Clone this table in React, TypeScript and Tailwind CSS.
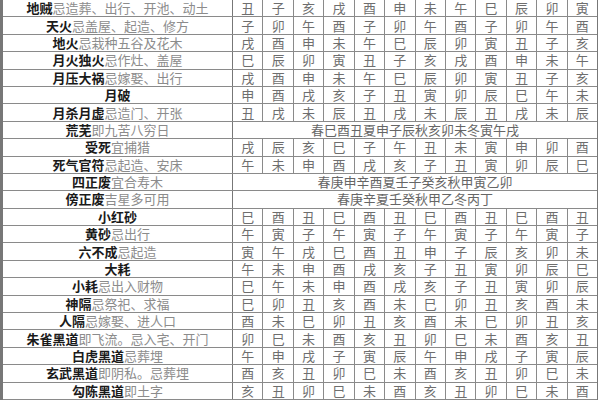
import React from 'react';

type Row = {
  name: string;
  note?: string;
  cells?: string[];
  merged?: string;
};

const rows: Row[] = [
  { name: '地贼', note: '忌造葬、出行、开池、动土', cells: '丑子亥戌酉申未午巳辰卯寅'.split('') },
  { name: '天火', note: '忌盖屋、起造、修方', cells: '子卯午酉子卯午酉子卯午酉'.split('') },
  { name: '地火', note: '忌栽种五谷及花木', cells: '戌酉申未午巳辰卯寅丑子亥'.split('') },
  { name: '月火独火', note: '忌作灶、盖屋', cells: '巳辰卯寅丑子亥戌酉申未午'.split('') },
  { name: '月压大祸', note: '忌嫁娶、出行', cells: '戌酉申未午巳辰卯寅丑子亥'.split('') },
  { name: '月破', cells: '申酉戌亥子丑寅卯辰巳午未'.split('') },
  { name: '月杀月虚', note: '忌造门、开张', cells: '丑戌未辰丑戌未辰丑戌未辰'.split('') },
  { name: '荒芜', note: '即九苦八穷日', merged: '春巳酉丑夏申子辰秋亥卯未冬寅午戌' },
  { name: '受死', note: '宜捕猎', cells: '戌辰亥巳子午丑未寅申卯酉'.split('') },
  { name: '死气官符', note: '忌起造、安床', cells: '午未申酉戌亥子丑寅卯辰巳'.split('') },
  { name: '四正废', note: '宜合寿木', merged: '春庚申辛酉夏壬子癸亥秋甲寅乙卯' },
  { name: '傍正废', note: '吉星多可用', merged: '春庚辛夏壬癸秋甲乙冬丙丁' },
  { name: '小红砂', cells: '巳酉丑巳酉丑巳酉丑巳酉丑'.split('') },
  { name: '黄砂', note: '忌出行', cells: '午寅子午寅子午寅子午寅子'.split('') },
  { name: '六不成', note: '忌起造', cells: '寅午戌巳酉丑申子辰亥卯未'.split('') },
  { name: '大耗', cells: '午未申酉戌亥子丑寅卯辰巳'.split('') },
  { name: '小耗', note: '忌出入财物', cells: '巳午未申酉戌亥子丑寅卯辰'.split('') },
  { name: '神隔', note: '忌祭祀、求福', cells: '巳卯丑亥酉未巳卯丑亥酉未'.split('') },
  { name: '人隔', note: '忌嫁娶、进人口', cells: '酉未巳卯丑亥酉未巳卯丑亥'.split('') },
  { name: '朱雀黑道', note: '即飞流。忌入宅、开门', cells: '卯巳未酉亥丑卯巳未酉亥丑'.split('') },
  { name: '白虎黑道', note: '忌葬埋', cells: '午申戌子寅辰午申戌子寅辰'.split('') },
  { name: '玄武黑道', note: '即阴私。忌葬埋', cells: '酉亥丑卯巳未酉亥丑卯巳未'.split('') },
  { name: '勾陈黑道', note: '即土字', cells: '亥丑卯巳未酉亥丑卯巳未酉'.split('') },
];

export default function App() {
  return (
    <div
      className="w-[600px] h-[400px] overflow-hidden bg-white"
      style={{ fontFamily: '"Noto Sans CJK SC", sans-serif' }}
    >
      <div className="w-[598px] border-l-[3px] border-r border-[#777]">
        {rows.map((r, i) => (
          <div key={i} className="flex h-[17.4px] border-b border-[#8a8a8a] text-[13px] leading-[16px]">
            <div className="w-[230px] shrink-0 border-r border-[#777] flex items-center justify-center whitespace-nowrap">
              <span className="font-bold text-[#1a1a1a]">{r.name}</span>
              {r.note && <span className="text-[#8c8c8c]">{r.note}</span>}
            </div>
            {r.merged ? (
              <div className="flex-1 flex items-center justify-center text-[#666]">{r.merged}</div>
            ) : (
              r.cells!.map((c, j) => (
                <div
                  key={j}
                  className="flex-1 flex items-center justify-center border-r border-[#8a8a8a] last:border-r-0 text-[#6e6e6e]"
                >
                  {c}
                </div>
              ))
            )}
          </div>
        ))}
      </div>
    </div>
  );
}
